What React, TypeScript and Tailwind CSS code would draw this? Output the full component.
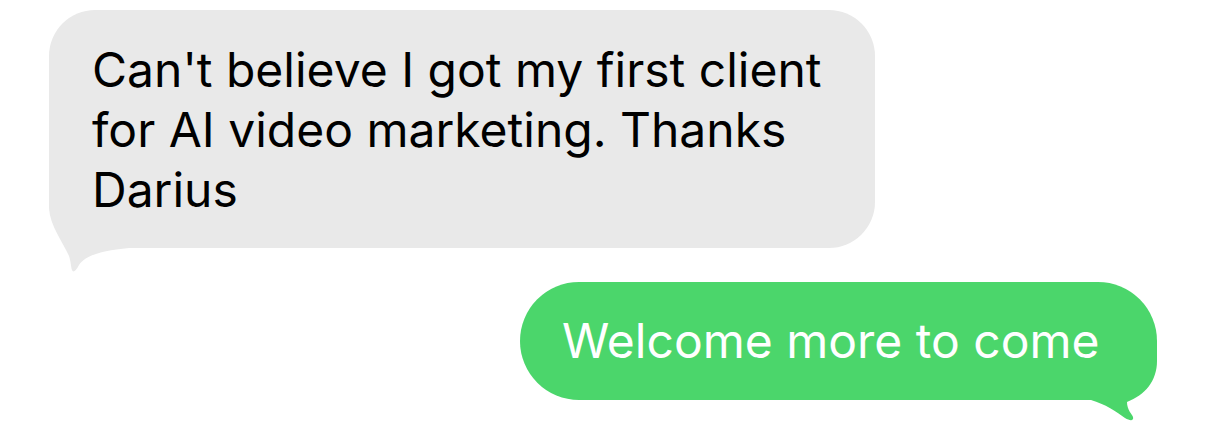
import React from 'react';

const App: React.FC = () => {
  return (
    <div className="w-[1206px] h-[436px] bg-white overflow-hidden font-['Inter',sans-serif]">
      <div className="flex flex-col pt-[10px] px-[49px]">
        {/* Incoming message */}
        <div className="relative self-start w-[826px] h-[238px] bg-[#e9e9e9] rounded-[46px] pl-[43px] pt-[30px]">
          <p className="relative z-10 text-[48px] leading-[60px] text-black">
            Can't believe I got my first client
            <br />
            for AI video marketing. Thanks
            <br />
            Darius
          </p>
          <svg className="absolute left-0 top-[190px]" width="110" height="76" viewBox="0 0 110 76">
            <path
              d="M0 0 L0 8 C1 26 14 42 20 56 C22 62 22 68 23 70 C24 73 27 71 30 65 C36 56 50 51 80 48 L110 48 L110 0 Z"
              fill="#e9e9e9"
            />
          </svg>
        </div>

        {/* Outgoing message */}
        <div className="relative self-end mt-[34px] w-[637px] h-[118px] bg-[#4bd66b] rounded-[59px] flex items-center pl-[42px]">
          <span className="relative z-10 text-[48px] leading-[60px] text-white">
            Welcome more to come
          </span>
          <svg className="absolute right-0 top-[59px]" width="110" height="82" viewBox="0 0 110 82">
            <path
              d="M110 0 L110 20 C110 40 98 54 80 61 C80 69 85 73 86 76 C87 80 83 80 78 77 C70 71 58 63 44 59 L0 59 L0 0 Z"
              fill="#4bd66b"
            />
          </svg>
        </div>
      </div>
    </div>
  );
};

export default App;
